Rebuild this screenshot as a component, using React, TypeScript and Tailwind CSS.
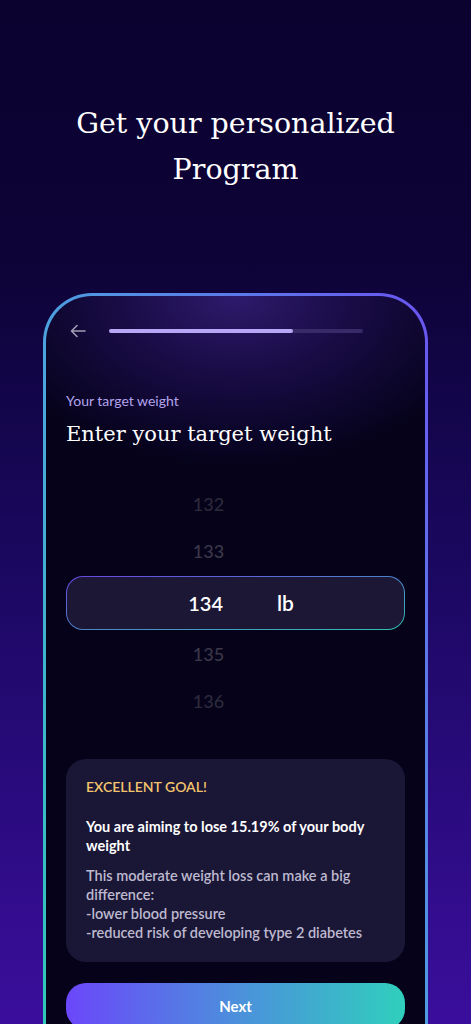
import React from "react";

export default function App() {
  const sans = { fontFamily: "Lato, 'Noto Sans', sans-serif" };
  return (
    <div
      className="w-full h-[1024px] overflow-hidden bg-[linear-gradient(to_bottom,#0b0230_0%,#0d0336_25%,#1a0860_55%,#3a0e9c_100%)]"
      style={sans}
    >
      <h1
        className="pt-[101px] text-center text-white text-[28.5px] leading-[46px] px-10"
        style={{ fontFamily: "'DejaVu Serif', 'Liberation Serif', serif", fontWeight: 300 }}
      >
        Get your personalized
        <br />
        Program
      </h1>

      <div className="mx-[43px] mt-[100px] h-[760px] rounded-t-[49px] p-[3px] bg-[linear-gradient(to_top_right,#2ecab6_0%,#4aa6de_45%,#6a54f2_100%)]">
        <div className="h-full rounded-t-[46px] bg-[#05021a] bg-[radial-gradient(ellipse_260px_170px_at_50%_0%,#2e1a6c_0%,#190c46_45%,#05021a_100%)] px-5">
          <div className="flex items-center h-[70px]">
            <svg width="16" height="14" viewBox="0 0 16 14" className="ml-1 shrink-0">
              <path
                d="M15 7H1.5M7 1.5L1.5 7L7 12.5"
                fill="none"
                stroke="#a19db4"
                strokeWidth="1.6"
                strokeLinecap="round"
                strokeLinejoin="round"
              />
            </svg>
            <div className="ml-[23px] mr-[42px] flex-1 h-[4px] rounded-full bg-[#362a68]">
              <div className="h-full rounded-full bg-[#b8a6f6]" style={{ width: "72.5%" }} />
            </div>
          </div>

          <div className="mt-[25px] text-[14px] leading-[20px] text-[#b3a4ee]">Your target weight</div>
          <div
            className="mt-[8px] text-white text-[21px] leading-[30px]"
            style={{ fontFamily: "'DejaVu Serif', 'Liberation Serif', serif" }}
          >
            Enter your target weight
          </div>

          <div className="mt-[32px] flex flex-col items-center">
            <div className="h-[47px] flex items-center text-[18px] font-medium text-[#2c2a3a]" style={{ marginLeft: "-54px" }}>132</div>
            <div className="h-[47px] flex items-center text-[18px] font-medium text-[#3b3849]" style={{ marginLeft: "-54px" }}>133</div>
            <div className="relative w-full h-[54px] my-[1px] rounded-[17px] p-px bg-[linear-gradient(to_bottom_right,#6b46e6,#30c0b0)]">
              <div className="w-full h-full rounded-[16px] bg-[#1b1735] flex items-center">
                <div className="w-[156px] text-right text-white text-[20px] font-semibold">134</div>
                <div className="ml-[54px] text-white text-[21px] font-semibold">lb</div>
              </div>
            </div>
            <div className="h-[47px] flex items-center text-[18px] font-medium text-[#3b3849]" style={{ marginLeft: "-54px" }}>135</div>
            <div className="h-[47px] flex items-center text-[18px] font-medium text-[#2c2a3a]" style={{ marginLeft: "-54px" }}>136</div>
          </div>

          <div className="mt-[34px] rounded-[20px] bg-[#1a1636] px-5 pt-[18px] pb-[20px]">
            <div className="text-[14px] leading-[20px] font-semibold text-[#f3c46c]">EXCELLENT GOAL!</div>
            <div className="mt-[20px] text-[14.5px] leading-[19px] font-bold text-white">
              You are aiming to lose 15.19% of your body weight
            </div>
            <div className="mt-[11px] text-[14.5px] leading-[19px] font-semibold text-[#bdb9cf]">
              This moderate weight loss can make a big difference:
              <br />
              -lower blood pressure
              <br />
              -reduced risk of developing type 2 diabetes
            </div>
          </div>

          <button className="mt-[21px] w-full h-[46px] rounded-[20px] bg-[linear-gradient(to_right,#6b47fa,#4c8fdc_50%,#30cfbd)] text-white text-[15px] font-bold">
            Next
          </button>
        </div>
      </div>
    </div>
  );
}
